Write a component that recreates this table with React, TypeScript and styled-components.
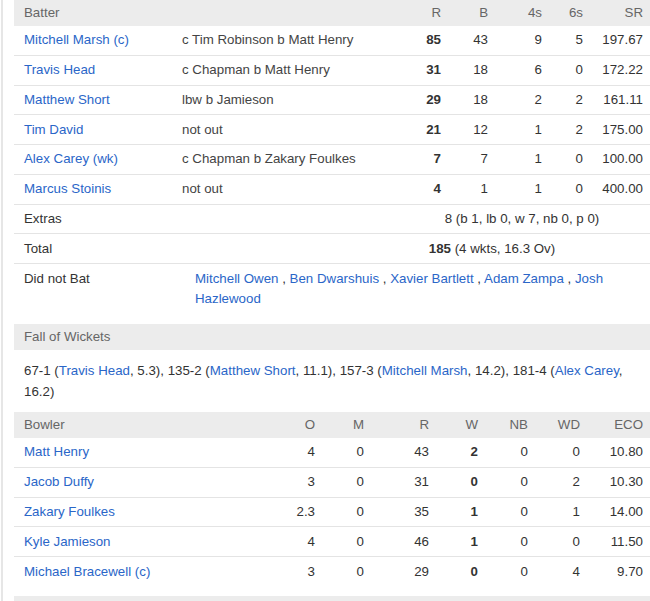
import React from "react";
import styled, { createGlobalStyle } from "styled-components";

const GlobalStyle = createGlobalStyle`
  body {
    margin: 0;
    background: #fff;
    font-family: "Liberation Sans", Arial, sans-serif;
    font-size: 13.3px;
    color: #333;
  }
`;

interface Batter {
  name: string;
  out: string;
  r: number;
  b: number;
  fours: number;
  sixes: number;
  sr: string;
}

interface Bowler {
  name: string;
  o: string;
  m: number;
  r: number;
  w: number;
  nb: number;
  wd: number;
  eco: string;
}

const batters: Batter[] = [
  { name: "Mitchell Marsh (c)", out: "c Tim Robinson b Matt Henry", r: 85, b: 43, fours: 9, sixes: 5, sr: "197.67" },
  { name: "Travis Head", out: "c Chapman b Matt Henry", r: 31, b: 18, fours: 6, sixes: 0, sr: "172.22" },
  { name: "Matthew Short", out: "lbw b Jamieson", r: 29, b: 18, fours: 2, sixes: 2, sr: "161.11" },
  { name: "Tim David", out: "not out", r: 21, b: 12, fours: 1, sixes: 2, sr: "175.00" },
  { name: "Alex Carey (wk)", out: "c Chapman b Zakary Foulkes", r: 7, b: 7, fours: 1, sixes: 0, sr: "100.00" },
  { name: "Marcus Stoinis", out: "not out", r: 4, b: 1, fours: 1, sixes: 0, sr: "400.00" },
];

const bowlers: Bowler[] = [
  { name: "Matt Henry", o: "4", m: 0, r: 43, w: 2, nb: 0, wd: 0, eco: "10.80" },
  { name: "Jacob Duffy", o: "3", m: 0, r: 31, w: 0, nb: 0, wd: 2, eco: "10.30" },
  { name: "Zakary Foulkes", o: "2.3", m: 0, r: 35, w: 1, nb: 0, wd: 1, eco: "14.00" },
  { name: "Kyle Jamieson", o: "4", m: 0, r: 46, w: 1, nb: 0, wd: 0, eco: "11.50" },
  { name: "Michael Bracewell (c)", o: "3", m: 0, r: 29, w: 0, nb: 0, wd: 4, eco: "9.70" },
];

const didNotBat = ["Mitchell Owen", "Ben Dwarshuis", "Xavier Bartlett", "Adam Zampa", "Josh Hazlewood"];

const wickets = [
  { score: "67-1", name: "Travis Head", over: "5.3" },
  { score: "135-2", name: "Matthew Short", over: "11.1" },
  { score: "157-3", name: "Mitchell Marsh", over: "14.2" },
  { score: "181-4", name: "Alex Carey", over: "16.2" },
];

const BAT_COLS = "158px 219px 40px 47px 54px 41px 60px";
const BOWL_COLS = "251px 40px 49px 65px 49px 50px 52px 63px";

const App: React.FC = () => {
  return (
    <Page>
      <GlobalStyle />
      <Card>
        <HeadRow $cols={BAT_COLS}>
          <Cell>Batter</Cell>
          <Cell />
          <Num>R</Num>
          <Num>B</Num>
          <Num>4s</Num>
          <Num>6s</Num>
          <Num>SR</Num>
        </HeadRow>
        {batters.map((b) => (
          <Row key={b.name} $cols={BAT_COLS}>
            <Cell><PlayerLink>{b.name}</PlayerLink></Cell>
            <Cell $muted>{b.out}</Cell>
            <Num $bold>{b.r}</Num>
            <Num>{b.b}</Num>
            <Num>{b.fours}</Num>
            <Num>{b.sixes}</Num>
            <Num>{b.sr}</Num>
          </Row>
        ))}
        <Row $cols={BAT_COLS}>
          <Cell>Extras</Cell>
          <Cell />
          <Span $from={3} $to={8}>8 (b 1, lb 0, w 7, nb 0, p 0)</Span>
        </Row>
        <Row $cols={BAT_COLS}>
          <Cell>Total</Cell>
          <Cell />
          <Span $from={3} $to={7}><b>185</b> (4 wkts, 16.3 Ov)</Span>
        </Row>
        <DnbRow>
          <DnbLabel>Did not Bat</DnbLabel>
          <DnbList>
            {didNotBat.map((n, i) => (
              <React.Fragment key={n}>
                <PlayerLink>{n}</PlayerLink>
                {i < didNotBat.length - 1 ? " , " : ""}
              </React.Fragment>
            ))}
          </DnbList>
        </DnbRow>

        <SectionBar>Fall of Wickets</SectionBar>
        <FowText>
          {wickets.map((w, i) => (
            <React.Fragment key={w.score}>
              {w.score} (<PlayerLink>{w.name}</PlayerLink>, {w.over}){i < wickets.length - 1 ? ", " : ""}
            </React.Fragment>
          ))}
        </FowText>

        <HeadRow $cols={BOWL_COLS}>
          <Cell>Bowler</Cell>
          <Num>O</Num>
          <Num>M</Num>
          <Num>R</Num>
          <Num>W</Num>
          <Num>NB</Num>
          <Num>WD</Num>
          <Num>ECO</Num>
        </HeadRow>
        {bowlers.map((b, i) => (
          <Row key={b.name} $cols={BOWL_COLS} $last={i === bowlers.length - 1}>
            <Cell><PlayerLink>{b.name}</PlayerLink></Cell>
            <Num>{b.o}</Num>
            <Num>{b.m}</Num>
            <Num>{b.r}</Num>
            <Num $bold>{b.w}</Num>
            <Num>{b.nb}</Num>
            <Num>{b.wd}</Num>
            <Num>{b.eco}</Num>
          </Row>
        ))}
        <Gap />
        <SectionBar />
      </Card>
    </Page>
  );
};
export default App;

const Page = styled.div`
  margin-left: 1px;
  border-left: 2px solid #e6e6e6;
  padding-left: 11px;
  min-height: 601px;
  box-sizing: border-box;
`;

const Card = styled.div`
  width: 636px;
  display: flex;
  flex-direction: column;
`;

const Row = styled.div<{ $cols: string; $last?: boolean }>`
  display: grid;
  grid-template-columns: ${(p) => p.$cols};
  align-items: center;
  box-sizing: border-box;
  height: 29.75px;
  padding: 0 7px 0 10px;
  border-bottom: ${(p) => (p.$last ? "none" : "1px solid #e4e4e4")};
  line-height: 20px;
`;

const HeadRow = styled(Row)`
  height: 26px;
  background: #ececec;
  border-bottom: none;
  color: #666;
`;

const Cell = styled.div<{ $muted?: boolean }>`
  white-space: nowrap;
  color: ${(p) => (p.$muted ? "#444" : "inherit")};
`;

const Num = styled.div<{ $bold?: boolean }>`
  text-align: right;
  font-weight: ${(p) => (p.$bold ? 700 : 400)};
`;

const Span = styled.div<{ $from: number; $to: number }>`
  grid-column: ${(p) => `${p.$from} / ${p.$to}`};
  text-align: center;
`;

const PlayerLink = styled.a`
  color: #2a66c8;
  text-decoration: none;
  cursor: pointer;
`;

const DnbRow = styled.div`
  display: flex;
  padding: 5px 7px 5px 10px;
  line-height: 20px;
  margin-bottom: 10px;
`;

const DnbLabel = styled.div`
  width: 171px;
  flex-shrink: 0;
`;

const DnbList = styled.div`
  width: 430px;
`;

const SectionBar = styled.div`
  height: 26px;
  line-height: 26px;
  background: #ececec;
  color: #666;
  padding: 0 10px;
`;

const FowText = styled.div`
  padding: 10px 15px 10px 10px;
  line-height: 21px;
`;

const Gap = styled.div`
  height: 9px;
`;
